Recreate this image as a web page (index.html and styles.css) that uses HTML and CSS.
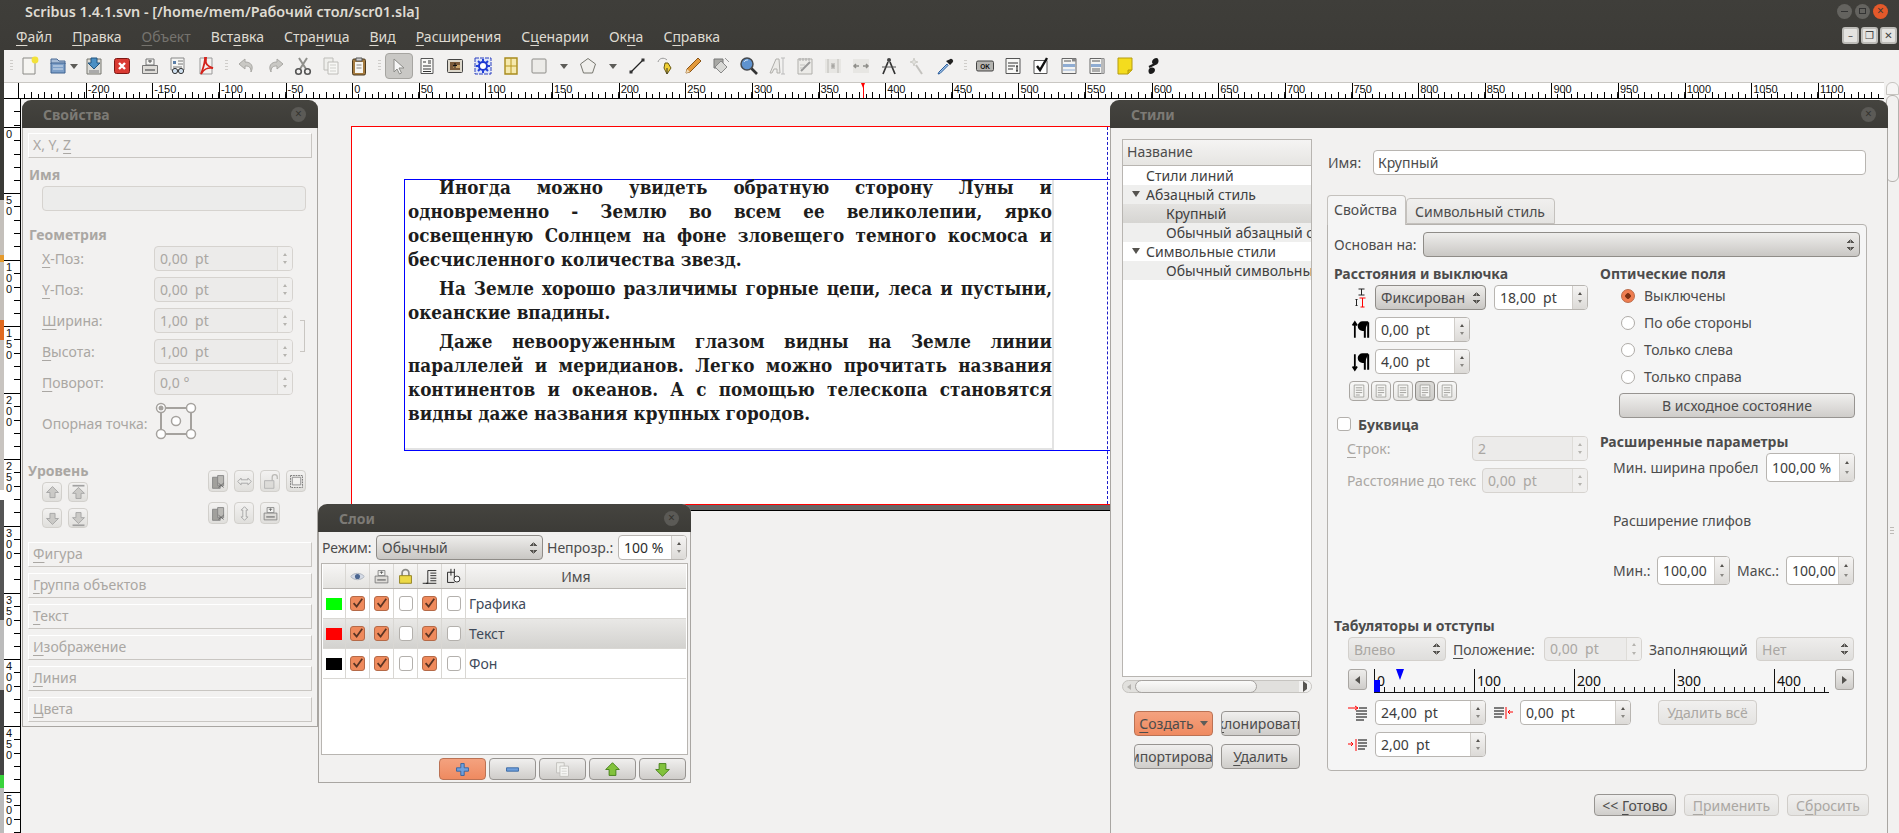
FILE: index.html
```html
<!DOCTYPE html>
<html lang="ru">
<head>
  <meta charset="UTF-8" />
  <title>Scribus 1.4.1.svn</title>
  <link rel="stylesheet" href="styles.css">
</head>
<body>

<svg class="sprite" xmlns="http://www.w3.org/2000/svg">
  <symbol id="i-new" viewBox="0 0 20 20"><path d="M3 2h12v16H3z" fill="#f6f5f2" stroke="#8a8a86"/><circle cx="15" cy="4" r="3.4" fill="#f3e23a"/></symbol>
  <symbol id="i-open" viewBox="0 0 20 20"><path d="M2 3h6l2 2h6v3H2z" fill="#a9bdd6" stroke="#4a6b96"/><path d="M2 7h14v10H2z" fill="#7d9fc8" stroke="#3f6390"/><path d="M4 10h10M4 13h10" stroke="#d6e1ee"/></symbol>
  <symbol id="i-save" viewBox="0 0 20 20"><path d="M3 3h14v15H3z" fill="#dcdcd8" stroke="#77776f"/><path d="M5 14h10v3H5z" fill="#aaa"/><path d="M7 2h6v5h3l-6 6-6-6h3z" fill="#4a8fc4" stroke="#23557f"/></symbol>
  <symbol id="i-close" viewBox="0 0 20 20"><rect x="2.5" y="2.5" width="15" height="15" rx="2" fill="#d93a32" stroke="#7d1612"/><path d="M7 7l6 6M13 7l-6 6" stroke="#fff" stroke-width="2.4"/></symbol>
  <symbol id="i-print" viewBox="0 0 20 20"><path d="M6 3h8v6H6z" fill="#f4f4f2" stroke="#777"/><path d="M2.500 9.500h15v8h-15z" fill="#dedcd8" stroke="#777"/><path d="M5 14h10" stroke="#888" stroke-width="2"/><path d="M8 5h4M10 4v3" stroke="#555"/></symbol>
  <symbol id="i-preflight" viewBox="0 0 20 20"><path d="M3 2h13v12H3z" fill="#f5f5f3" stroke="#888"/><path d="M5 5h3v3H5z" fill="#5a7ea8"/><path d="M10 5h5M10 8h5M5 11h9" stroke="#777"/><circle cx="7" cy="15" r="2.600" fill="#cfe0f0" stroke="#333"/><circle cx="13" cy="15" r="2.600" fill="#cfe0f0" stroke="#333"/></symbol>
  <symbol id="i-pdf" viewBox="0 0 20 20"><path d="M4 2h12v16H4z" fill="#f3f2f0" stroke="#999"/><path d="M10 2c-1 6 1 8 7 10-6-1-9 1-12 6 2-6 4-10 4-16z" fill="none" stroke="#d4231c" stroke-width="1.800"/></symbol>
  <symbol id="i-undo" viewBox="0 0 20 20"><path d="M8 3L2 8l6 5v-3c4 0 6 1 6 6 3-6 0-10-6-10z" fill="#c9c8c4" stroke="#a9a8a4"/></symbol>
  <symbol id="i-redo" viewBox="0 0 20 20"><path d="M12 3l6 5-6 5v-3c-4 0-6 1-6 6-3-6 0-10 6-10z" fill="#c9c8c4" stroke="#a9a8a4"/></symbol>
  <symbol id="i-cut" viewBox="0 0 20 20"><path d="M6 2l7 11M14 2L7 13" stroke="#8f8f8b" stroke-width="2"/><circle cx="5.500" cy="15.500" r="2.800" fill="none" stroke="#555" stroke-width="1.600"/><circle cx="14.500" cy="15.500" r="2.800" fill="none" stroke="#555" stroke-width="1.600"/></symbol>
  <symbol id="i-copy" viewBox="0 0 20 20"><path d="M3 2h9v12H3z" fill="#efefec" stroke="#bdbcb8"/><path d="M7 6h10v12H7z" fill="#f7f7f5" stroke="#bdbcb8"/><path d="M9 9h6M9 12h6M9 15h6" stroke="#cfcfcb"/></symbol>
  <symbol id="i-paste" viewBox="0 0 20 20"><rect x="3.500" y="3" width="13" height="16" rx="1.500" fill="#a57b3f" stroke="#4b3a20"/><path d="M6 6h8v11H6z" fill="#f7f6f2"/><path d="M7 2h6v3H7z" fill="#ccc" stroke="#555"/><path d="M7.500 9h5M7.500 12h5" stroke="#888"/></symbol>
  <symbol id="i-select" viewBox="0 0 20 20"><path d="M5 3l10 9h-5l2.500 5-2 1-2.500-5L5 16z" fill="#f6f6f6" stroke="#8c8c88"/></symbol>
  <symbol id="i-text" viewBox="0 0 20 20"><path d="M4 2.500h12v15H4z" fill="#f9f9f7" stroke="#555"/><path d="M6 6h3M11 5h3M11 7h3M6 10h8M6 13h8M6 15.500h8" stroke="#333"/></symbol>
  <symbol id="i-image" viewBox="0 0 20 20"><rect x="2.500" y="3.500" width="15" height="13" rx="1" fill="#ddd8cc" stroke="#444"/><path d="M5 6h10v8H5z" fill="#7a5a3a"/><path d="M8 12h7V9h-5z" fill="#c9a36a"/><path d="M10 7v5M8 9.500h4" stroke="#111"/></symbol>
  <symbol id="i-render" viewBox="0 0 20 20"><path d="M2 2h16v16H2z" fill="#dfe6f8" stroke="#2b3fbf" stroke-dasharray="4 1"/><circle cx="10" cy="10" r="4" fill="#fff" stroke="#1f38d0" stroke-width="2"/><path d="M10 3v3M10 14v3M3 10h3M14 10h3M5 5l2 2M15 5l-2 2M5 15l2-2M15 15l-2-2" stroke="#2340d8" stroke-width="2"/></symbol>
  <symbol id="i-table" viewBox="0 0 20 20"><path d="M4 2h12v16H4z" fill="#f5e9ae" stroke="#a88a1c" stroke-width="1.400"/><path d="M10 2v16M4 10h12" stroke="#b8981f"/></symbol>
  <symbol id="i-shape" viewBox="0 0 20 20"><rect x="3" y="3" width="14" height="14" rx="1" fill="#ecebe8" stroke="#8d8c88"/></symbol>
  <symbol id="i-poly" viewBox="0 0 20 20"><path d="M10 2.500l7.500 5.500-3 9h-9l-3-9z" fill="#f0efec" stroke="#77776f"/></symbol>
  <symbol id="i-line" viewBox="0 0 20 20"><path d="M4 16L16 4" stroke="#222" stroke-width="1.300"/><path d="M2.500 14.500h3v3h-3zM14.500 2.500h3v3h-3z" fill="#333"/></symbol>
  <symbol id="i-nib" viewBox="0 0 20 20"><path d="M3 6c1-4 6-5 9-2" fill="none" stroke="#999"/><path d="M10 7l3 0 3 5-4 6-3-6z" fill="#f0cf34" stroke="#6a5a10"/><path d="M12 12v6" stroke="#333"/></symbol>
  <symbol id="i-pencil" viewBox="0 0 20 20"><path d="M15 2l3 3L7 16l-4 1 1-4z" fill="#e39a3c" stroke="#8a5518"/><path d="M3 17l1-4 3 3z" fill="#f3dcb6"/></symbol>
  <symbol id="i-rotate" viewBox="0 0 20 20"><path d="M3 3h9v9H3z" fill="#a8a8a4" stroke="#777"/><path d="M10 5l6 6-6 6-6-6z" fill="#d9d9d6" stroke="#888"/><path d="M14 2l4 4" stroke="#999"/></symbol>
  <symbol id="i-zoom" viewBox="0 0 20 20"><circle cx="8" cy="8" r="6" fill="#5f93cf" stroke="#46494d" stroke-width="1.500"/><path d="M5 6c1-2 3-2 4-2" stroke="#cfe2f5" fill="none"/><path d="M12.500 12.500l5.500 5.500" stroke="#333" stroke-width="2.600"/></symbol>
  <symbol id="i-edit" viewBox="0 0 20 20"><path d="M3 17L9 3h3l1 14h-3l0-4H7l-2 4z" fill="#ecebe8" stroke="#b0afab"/><path d="M16 2v16M14 2h4M14 18h4" stroke="#bbb"/></symbol>
  <symbol id="i-story" viewBox="0 0 20 20"><path d="M3 3h14v15H3z" fill="#ecebe8" stroke="#b0afab"/><path d="M5 2v3M8 2v3M11 2v3M14 2v3" stroke="#aaa"/><path d="M6 15L15 6" stroke="#999" stroke-width="2"/><path d="M5 9h5M5 12h3" stroke="#c3c3c0"/></symbol>
  <symbol id="i-link" viewBox="0 0 20 20"><path d="M2 3h16v14H2z" fill="#e7e6e3"/><path d="M5 3v14M15 3v14" stroke="#d2d1cd" stroke-width="2"/><path d="M8 7h4v6H8z" fill="#c6c5c2"/><path d="M10 8v4M8.500 10h3" stroke="#9e9d99"/></symbol>
  <symbol id="i-unlink" viewBox="0 0 20 20"><path d="M2 3h16v14H2z" fill="#e7e6e3"/><path d="M4 10h4M5 8l-2 2 2 2M16 10h-4M15 8l2 2-2 2" fill="none" stroke="#8f8e8a" stroke-width="1.500"/></symbol>
  <symbol id="i-measure" viewBox="0 0 20 20"><circle cx="10" cy="4" r="2" fill="#444"/><path d="M9 6L4 18M11 6l5 12" stroke="#333" stroke-width="1.700"/><path d="M3 11h14" stroke="#555"/></symbol>
  <symbol id="i-wand" viewBox="0 0 20 20"><path d="M9 9l6 9" stroke="#c3c2be" stroke-width="2"/><path d="M7 2l1 3 3 1-3 1-1 3-1-3-3-1 3-1z" fill="#e2e1dd" stroke="#cfcec9"/></symbol>
  <symbol id="i-dropper" viewBox="0 0 20 20"><path d="M12 8L4 16l-1 2 2-.5 8-8z" fill="#9cc2e8" stroke="#2b5d9c"/><path d="M11 5l4 4 2.500-2.500a2 2 0 0 0-3-3z" fill="#222"/></symbol>
  <symbol id="i-ok" viewBox="0 0 20 20"><rect x="1.500" y="5" width="17" height="10" rx="1.500" fill="#b5b4b0" stroke="#444"/><text x="10" y="12.500" font-family="Liberation Sans" font-weight="700" font-size="6.500" text-anchor="middle" fill="#111">OK</text></symbol>
  <symbol id="i-ptext" viewBox="0 0 20 20"><path d="M3 2.500h14v15H3z" fill="#f8f8f6" stroke="#555"/><path d="M5 7h10M5 10h7M5 13h5" stroke="#333"/><path d="M14 10v5M13 10h2M13 15h2" stroke="#111"/></symbol>
  <symbol id="i-pcheck" viewBox="0 0 20 20"><path d="M3 4.500h13v13H3z" fill="#fff" stroke="#555"/><path d="M6 10l3 4 7-12" fill="none" stroke="#111" stroke-width="2.400"/></symbol>
  <symbol id="i-pcombo" viewBox="0 0 20 20"><path d="M3 2.500h14v15H3z" fill="#f3f3f1" stroke="#666"/><path d="M13 2.500h4v3h-4z" fill="#888"/><path d="M5 5h7" stroke="#555"/><path d="M4 8h12v3H4z" fill="#8facd2"/><path d="M4 13h12v2H4z" fill="#c3d1e4"/></symbol>
  <symbol id="i-plist" viewBox="0 0 20 20"><path d="M3 2.500h14v15H3z" fill="#f3f3f1" stroke="#666"/><path d="M14 2.500h3v15h-3z" fill="#bbb"/><path d="M5 5h8" stroke="#555"/><path d="M4 8h10v3H4z" fill="#8facd2"/><path d="M5 13h8M5 15h8" stroke="#666"/></symbol>
  <symbol id="i-note" viewBox="0 0 20 20"><path d="M3 2h14v12l-4 4H3z" fill="#f4dc1e" stroke="#b59c10"/><path d="M13 18v-4h4" fill="#d9c013" stroke="#b59c10"/></symbol>
  <symbol id="i-chain" viewBox="0 0 20 20"><path d="M14 2c-3 0-5 2-5 4s2 3 5 2c2-1 2-5 0-6zM7 18c3 0 5-2 5-4s-2-3-5-2c-2 1-2 5 0 6z" fill="#1b1b1b"/><path d="M6 11l8-4" stroke="#1b1b1b" stroke-width="2"/></symbol>
  <symbol id="i-tick" viewBox="0 0 15 15"><path d="M3 7l3.500 4L13 2" fill="none" stroke="#5a3424" stroke-width="2"/></symbol>
  <symbol id="i-eye" viewBox="0 0 20 20"><path d="M2 10c4-5 12-5 16 0-4 5-12 5-16 0z" fill="#d5dbe6" stroke="#a7adb8"/><circle cx="10" cy="10" r="3" fill="#4b6691"/></symbol>
  <symbol id="i-lock" viewBox="0 0 20 20"><path d="M6 9V6a4 4 0 0 1 8 0v3" fill="none" stroke="#8a8a86" stroke-width="2"/><path d="M3 9h14v9H3z" fill="#ecd946" stroke="#8a7a14"/></symbol>
  <symbol id="i-flow" viewBox="0 0 20 20"><path d="M8 3h10M11 6h7M11 9h7M11 12h7M11 15h7M6 18h12M8 3v15M2 18h6" stroke="#111" fill="none"/></symbol>
  <symbol id="i-hand" viewBox="0 0 20 20"><path d="M3 5h8M7 1v8M3 5v12h8M11 1v11" fill="none" stroke="#111"/><circle cx="14" cy="13" r="3.500" fill="#fff" stroke="#111"/></symbol>
  <symbol id="i-plus" viewBox="0 0 20 20"><path d="M8 3h4v5h5v4h-5v5H8v-5H3V8h5z" fill="#6f9fdc" stroke="#2d5f9e"/></symbol>
  <symbol id="i-minus" viewBox="0 0 20 20"><path d="M3 8h14v4H3z" fill="#6f9fdc" stroke="#2d5f9e"/></symbol>
  <symbol id="i-gup" viewBox="0 0 20 20"><path d="M10 2l8 8h-4v7H6v-7H2z" fill="#82c23c" stroke="#3d7a12"/></symbol>
  <symbol id="i-gdn" viewBox="0 0 20 20"><path d="M10 18l8-8h-4V3H6v7H2z" fill="#82c23c" stroke="#3d7a12"/></symbol>
  <symbol id="i-lvup" viewBox="0 0 20 20"><path d="M10 3l7 7h-4v6H7v-6H3z" fill="#c8c7c4" stroke="#999"/></symbol>
  <symbol id="i-lvtop" viewBox="0 0 20 20"><path d="M3 2h14" stroke="#999" stroke-width="2"/><path d="M10 4l7 7h-4v6H7v-6H3z" fill="#c8c7c4" stroke="#999"/></symbol>
  <symbol id="i-lvdn" viewBox="0 0 20 20"><path d="M10 17l7-7h-4V4H7v6H3z" fill="#c8c7c4" stroke="#999"/></symbol>
  <symbol id="i-lvbot" viewBox="0 0 20 20"><path d="M3 18h14" stroke="#999" stroke-width="2"/><path d="M10 16l7-7h-4V3H7v6H3z" fill="#c8c7c4" stroke="#999"/></symbol>
  <symbol id="i-lgroup" viewBox="0 0 20 20"><path d="M3 5h9v13H3z" fill="#9a9995" stroke="#777"/><path d="M9 3h7v12H9z" fill="#b5b4b0" stroke="#777"/><path d="M10 12l6 5M16 12l-6 5" stroke="#555"/></symbol>
  <symbol id="i-lunlock" viewBox="0 0 20 20"><path d="M12 9V5a3 3 0 0 1 6 0v2" fill="none" stroke="#b5b4b0" stroke-width="1.500"/><path d="M3 9h11v9H3z" fill="#dcdbd8" stroke="#aaa"/></symbol>
  <symbol id="i-lsize" viewBox="0 0 20 20"><path d="M3 3h14v14H3z" fill="#f3f2f0" stroke="#555" stroke-dasharray="2 1"/><path d="M5 5h10v9H5z" fill="none" stroke="#777"/></symbol>
  <symbol id="i-lhflip" viewBox="0 0 20 20"><path d="M2 10l4-4v2h8V6l4 4-4 4v-2H6v2z" fill="#ececea" stroke="#999"/></symbol>
  <symbol id="i-lvflip" viewBox="0 0 20 20"><path d="M10 2l4 4h-2v8h2l-4 4-4-4h2V6H6z" fill="#ececea" stroke="#999"/></symbol>
  <symbol id="i-align" viewBox="0 0 20 20"><path d="M4 2.500h12v15H4z" fill="#f6f6f4" stroke="#9b9a96"/><path d="M6 6h8M6 9h8M6 12h8M6 15h5" stroke="#8d8c88"/></symbol>
  <symbol id="i-lead" viewBox="0 0 14 20"><path d="M7 1v6M4 1h6M4 7h6" stroke="#222"/><path d="M8 10v9M5 10h6M6 19h4" stroke="#f00"/><path d="M2 11v7M1 12l1-1 1 1M1 17l1 1 1-1" stroke="#222" fill="none"/></symbol>
  <symbol id="i-pabove" viewBox="0 0 18 18"><path d="M3 2v14M1 5l2-3 2 3" stroke="#000" stroke-width="1.600" fill="none"/><path d="M12 2v14M15 2v14M15 2H10a3.500 3.500 0 0 0 0 7h2" stroke="#000" stroke-width="1.800" fill="#000"/></symbol>
  <symbol id="i-pbelow" viewBox="0 0 18 18"><path d="M3 2v14M1 13l2 3 2-3" stroke="#000" stroke-width="1.600" fill="none"/><path d="M12 2v14M15 2v14M15 2H10a3.500 3.500 0 0 0 0 7h2" stroke="#000" stroke-width="1.800" fill="#000"/></symbol>
  <symbol id="i-ifirst" viewBox="0 0 20 16"><path d="M0 3h10M7 1l3 2-3 2" stroke="#f00" fill="none"/><path d="M11 3h8M8 6h11M8 9h11M8 12h11M8 15h8" stroke="#000"/></symbol>
  <symbol id="i-ileft" viewBox="0 0 20 16"><path d="M0 7h5M3 5l2 2-2 2" stroke="#f00" fill="none"/><path d="M8 2v12" stroke="#f00"/><path d="M10 3h9M10 6h9M10 9h9M10 12h7" stroke="#000"/></symbol>
  <symbol id="i-iright" viewBox="0 0 20 16"><path d="M0 3h10M0 6h10M0 9h10M0 12h8" stroke="#000"/><path d="M12 2v12" stroke="#f00"/><path d="M19 7h-5M16 5l-2 2 2 2" stroke="#f00" fill="none"/></symbol>
</svg>

<header class="topbar">
  <div class="title-row">
    <span class="app-title">Scribus 1.4.1.svn - [/home/mem/Рабочий стол/scr01.sla]</span>
    <div class="wm-buttons"><i class="wm"><b class="wm-min"></b></i><i class="wm"><b class="wm-max"></b></i><i class="wm wm-close">×</i></div>
  </div>
  <div class="menu-row">
    <nav class="menu">
      <span><u>Ф</u>айл</span><span><u>П</u>равка</span><span class="off"><u>О</u>бъект</span><span>Вст<u>а</u>вка</span><span>Стра<u>н</u>ица</span><span><u>В</u>ид</span><span><u>Р</u>асширения</span><span>С<u>ц</u>енарии</span><span>Ок<u>н</u>а</span><span>С<u>п</u>равка</span>
    </nav>
    <div class="mdi-buttons"><i class="mdi">–</i><i class="mdi">❐</i><i class="mdi">✕</i></div>
  </div>
</header>

<div class="desk">
  <div class="strip"></div>
  <div class="desk-main">

    <div class="toolbar">
      <i class="grip g-a"></i>
      <span class="tool"><svg><use href="#i-new"/></svg></span>
      <span class="tool tool-open"><svg><use href="#i-open"/></svg><b class="drop"></b></span>
      <span class="tool"><svg><use href="#i-save"/></svg></span>
      <span class="tool"><svg><use href="#i-close"/></svg></span>
      <span class="tool"><svg><use href="#i-print"/></svg></span>
      <span class="tool"><svg><use href="#i-preflight"/></svg></span>
      <span class="tool"><svg><use href="#i-pdf"/></svg></span>
      <i class="grip g-b"></i>
      <span class="tool"><svg><use href="#i-undo"/></svg></span>
      <span class="tool"><svg><use href="#i-redo"/></svg></span>
      <span class="tool"><svg><use href="#i-cut"/></svg></span>
      <span class="tool"><svg><use href="#i-copy"/></svg></span>
      <span class="tool"><svg><use href="#i-paste"/></svg></span>
      <i class="grip g-c"></i>
      <span class="tool active"><svg><use href="#i-select"/></svg></span>
      <span class="tool"><svg><use href="#i-text"/></svg></span>
      <span class="tool"><svg><use href="#i-image"/></svg></span>
      <span class="tool"><svg><use href="#i-render"/></svg></span>
      <span class="tool"><svg><use href="#i-table"/></svg></span>
      <span class="tool"><svg><use href="#i-shape"/></svg></span>
      <span class="tool-arrow"><b class="drop"></b></span>
      <span class="tool"><svg><use href="#i-poly"/></svg></span>
      <span class="tool-arrow"><b class="drop"></b></span>
      <span class="tool"><svg><use href="#i-line"/></svg></span>
      <span class="tool"><svg><use href="#i-nib"/></svg></span>
      <span class="tool"><svg><use href="#i-pencil"/></svg></span>
      <span class="tool"><svg><use href="#i-rotate"/></svg></span>
      <span class="tool"><svg><use href="#i-zoom"/></svg></span>
      <span class="tool"><svg><use href="#i-edit"/></svg></span>
      <span class="tool"><svg><use href="#i-story"/></svg></span>
      <span class="tool"><svg><use href="#i-link"/></svg></span>
      <span class="tool"><svg><use href="#i-unlink"/></svg></span>
      <span class="tool"><svg><use href="#i-measure"/></svg></span>
      <span class="tool"><svg><use href="#i-wand"/></svg></span>
      <span class="tool"><svg><use href="#i-dropper"/></svg></span>
      <i class="grip g-c"></i>
      <span class="tool"><svg><use href="#i-ok"/></svg></span>
      <span class="tool"><svg><use href="#i-ptext"/></svg></span>
      <span class="tool"><svg><use href="#i-pcheck"/></svg></span>
      <span class="tool"><svg><use href="#i-pcombo"/></svg></span>
      <span class="tool"><svg><use href="#i-plist"/></svg></span>
      <span class="tool"><svg><use href="#i-note"/></svg></span>
      <span class="tool"><svg><use href="#i-chain"/></svg></span>
    </div>

    <div class="hruler">
      <div class="corner"></div>
      <div class="hcell blank"></div>
      <div class="hcell">-200</div><div class="hcell">-150</div><div class="hcell">-100</div><div class="hcell">-50</div>
      <div class="hcell">0</div><div class="hcell">50</div><div class="hcell">100</div><div class="hcell">150</div>
      <div class="hcell">200</div><div class="hcell">250</div><div class="hcell">300</div><div class="hcell">350</div>
      <div class="hcell">400</div><div class="hcell">450</div><div class="hcell">500</div><div class="hcell">550</div>
      <div class="hcell">600</div><div class="hcell">650</div><div class="hcell">700</div><div class="hcell">750</div>
      <div class="hcell">800</div><div class="hcell">850</div><div class="hcell">900</div><div class="hcell">950</div>
      <div class="hcell">1000</div><div class="hcell">1050</div><div class="hcell">1100</div>
      <i class="pos-mark"></i>
    </div>

    <div class="work">
      <div class="vruler">
        <div class="vcell first"></div>
        <div class="vcell"><b>0</b></div>
        <div class="vcell"><b>5</b><b>0</b></div>
        <div class="vcell"><b>1</b><b>0</b><b>0</b></div>
        <div class="vcell"><b>1</b><b>5</b><b>0</b></div>
        <div class="vcell"><b>2</b><b>0</b><b>0</b></div>
        <div class="vcell"><b>2</b><b>5</b><b>0</b></div>
        <div class="vcell"><b>3</b><b>0</b><b>0</b></div>
        <div class="vcell"><b>3</b><b>5</b><b>0</b></div>
        <div class="vcell"><b>4</b><b>0</b><b>0</b></div>
        <div class="vcell"><b>4</b><b>5</b><b>0</b></div>
        <div class="vcell"><b>5</b><b>0</b><b>0</b></div>
      </div>
      <div class="canvas">
        <div class="page">
          <i class="margin-guide"></i>
          <div class="frame">
            <div class="story">
              <p><span class="ln first">Иногда можно увидеть обратную сторону Луны и</span><span class="ln">одновременно - Землю во всем ее великолепии, ярко</span><span class="ln">освещенную Солнцем на фоне зловещего темного космоса и</span><span class="end">бесчисленного количества звезд.</span></p>
              <p><span class="ln first">На Земле хорошо различимы горные цепи, леса и пустыни,</span><span class="end">океанские впадины.</span></p>
              <p><span class="ln first">Даже невооруженным глазом видны на Земле линии</span><span class="ln">параллелей и меридианов. Легко можно прочитать названия</span><span class="ln">континентов и океанов. А с помощью телескопа становятся</span><span class="end">видны даже названия крупных городов.</span></p>
            </div>
          </div>
        </div>
      </div>
    </div>
  </div>
</div>

<div class="vscroll"><i class="vscroll-btn"></i><i class="vscroll-thumb"></i></div>
<i class="edge-grip"></i>

<!-- Свойства -->
<section class="win win-props">
  <div class="win-title"><span>Свойства</span><i class="win-close">×</i></div>
  <div class="section first-section">X, Y, <u>Z</u></div>
  <h3 class="head name-head">Имя</h3>
  <div class="name-field"></div>
  <h3 class="head geo-head">Геометрия</h3>
  <div class="geo-grid">
    <span class="lab"><u>X</u>-Поз:</span><div class="spin off"><span class="val">0,00&nbsp; pt</span><span class="btns"><i class="up"></i><i class="dn"></i></span></div>
    <span class="lab"><u>Y</u>-Поз:</span><div class="spin off"><span class="val">0,00&nbsp; pt</span><span class="btns"><i class="up"></i><i class="dn"></i></span></div>
    <span class="lab"><u>Ш</u>ирина:</span><div class="spin off"><span class="val">1,00&nbsp; pt</span><span class="btns"><i class="up"></i><i class="dn"></i></span></div>
    <span class="lab"><u>В</u>ысота:</span><div class="spin off"><span class="val">1,00&nbsp; pt</span><span class="btns"><i class="up"></i><i class="dn"></i></span></div>
    <span class="lab"><u>П</u>оворот:</span><div class="spin off"><span class="val">0,0 °</span><span class="btns"><i class="up"></i><i class="dn"></i></span></div>
    <i class="ratio-link"></i>
  </div>
  <div class="anchor-row">
    <span class="lab">Опорная точка:</span>
    <svg class="anchor" viewBox="0 0 42 38"><rect x="6" y="6" width="30" height="26" fill="none" stroke="#a5a29e" stroke-width="2"/><circle cx="6" cy="6" r="4.500" fill="#fff" stroke="#a5a29e" stroke-width="1.500"/><circle cx="6" cy="6" r="2.500" fill="#a5a29e"/><circle cx="36" cy="6" r="4.500" fill="#fff" stroke="#a5a29e" stroke-width="1.500"/><circle cx="6" cy="32" r="4.500" fill="#fff" stroke="#a5a29e" stroke-width="1.500"/><circle cx="36" cy="32" r="4.500" fill="#fff" stroke="#a5a29e" stroke-width="1.500"/><circle cx="21" cy="19" r="4.500" fill="#fff" stroke="#a5a29e" stroke-width="1.500"/></svg>
  </div>
  <div class="level-row">
    <div class="level-left">
      <h3 class="head">Уровень</h3>
      <div class="level-btns">
        <span class="ibtn"><svg><use href="#i-lvup"/></svg></span><span class="ibtn"><svg><use href="#i-lvtop"/></svg></span>
        <span class="ibtn"><svg><use href="#i-lvdn"/></svg></span><span class="ibtn"><svg><use href="#i-lvbot"/></svg></span>
      </div>
    </div>
    <div class="level-right">
      <span class="ibtn"><svg><use href="#i-lgroup"/></svg></span><span class="ibtn"><svg><use href="#i-lhflip"/></svg></span><span class="ibtn"><svg><use href="#i-lunlock"/></svg></span><span class="ibtn"><svg><use href="#i-lsize"/></svg></span>
      <span class="ibtn"><svg><use href="#i-lgroup"/></svg></span><span class="ibtn"><svg><use href="#i-lvflip"/></svg></span><span class="ibtn"><svg><use href="#i-print"/></svg></span>
    </div>
  </div>
  <div class="section-list">
    <div class="section"><u>Ф</u>игура</div>
    <div class="section"><u>Г</u>руппа объектов</div>
    <div class="section"><u>Т</u>екст</div>
    <div class="section"><u>И</u>зображение</div>
    <div class="section"><u>Л</u>иния</div>
    <div class="section"><u>Ц</u>вета</div>
  </div>
</section>

<!-- Слои -->
<section class="win win-layers">
  <div class="win-title"><span>Слои</span><i class="win-close">×</i></div>
  <div class="layer-top">
    <span class="mode-lab">Режим:</span>
    <div class="sel mode-sel"><span>Обычный</span><i class="updown"></i></div>
    <span class="op-lab">Непрозр.:</span>
    <div class="spin op-spin"><span class="val">100 %</span><span class="btns"><i class="up"></i><i class="dn"></i></span></div>
  </div>
  <div class="layer-table">
    <div class="lrow lhead">
      <span></span>
      <span><svg><use href="#i-eye"/></svg></span><span><svg><use href="#i-print"/></svg></span><span><svg><use href="#i-lock"/></svg></span><span><svg><use href="#i-flow"/></svg></span><span><svg><use href="#i-hand"/></svg></span>
      <span class="lname-head">Имя</span>
    </div>
    <div class="lrow">
      <span><i class="swatch green"></i></span>
      <span><i class="chk on"><svg><use href="#i-tick"/></svg></i></span><span><i class="chk on"><svg><use href="#i-tick"/></svg></i></span><span><i class="chk"></i></span><span><i class="chk on"><svg><use href="#i-tick"/></svg></i></span><span><i class="chk"></i></span>
      <span class="lname">Графика</span>
    </div>
    <div class="lrow current">
      <span><i class="swatch red"></i></span>
      <span><i class="chk on"><svg><use href="#i-tick"/></svg></i></span><span><i class="chk on"><svg><use href="#i-tick"/></svg></i></span><span><i class="chk"></i></span><span><i class="chk on"><svg><use href="#i-tick"/></svg></i></span><span><i class="chk"></i></span>
      <span class="lname">Текст</span>
    </div>
    <div class="lrow">
      <span><i class="swatch black"></i></span>
      <span><i class="chk on"><svg><use href="#i-tick"/></svg></i></span><span><i class="chk on"><svg><use href="#i-tick"/></svg></i></span><span><i class="chk"></i></span><span><i class="chk on"><svg><use href="#i-tick"/></svg></i></span><span><i class="chk"></i></span>
      <span class="lname">Фон</span>
    </div>
  </div>
  <div class="layer-btns">
    <span class="btn hot"><svg><use href="#i-plus"/></svg></span>
    <span class="btn"><svg><use href="#i-minus"/></svg></span>
    <span class="btn"><svg><use href="#i-copy"/></svg></span>
    <span class="btn"><svg><use href="#i-gup"/></svg></span>
    <span class="btn"><svg><use href="#i-gdn"/></svg></span>
  </div>
</section>

<!-- Стили -->
<section class="win win-styles">
  <div class="win-title"><span>Стили</span><i class="win-close">×</i></div>
  <div class="styles-body">

    <div class="styles-left">
      <div class="tree">
        <div class="tree-head">Название</div>
        <div class="tree-row lv1">Стили линий</div>
        <div class="tree-row lv1 alt open">Абзацный стиль</div>
        <div class="tree-row lv2 selected">Крупный</div>
        <div class="tree-row lv2 alt">Обычный абзацный стиль</div>
        <div class="tree-row lv1 open">Символьные стили</div>
        <div class="tree-row lv2 alt">Обычный символьный стиль</div>
      </div>
      <div class="hscroll"><i class="hs-l"></i><i class="hs-thumb"></i><i class="hs-r"></i></div>
      <div class="style-btns">
        <span class="btn hot"><span><u>С</u>оздать</span><b class="drop"></b></span>
        <span class="btn clip"><span><u>к</u>лонировать</span></span>
        <span class="btn clip"><span><u>и</u>мпортировать</span></span>
        <span class="btn"><span><u>У</u>далить</span></span>
      </div>
    </div>

    <div class="styles-right">
      <div class="name-row"><span class="name-lab">Имя:</span><div class="edit"><span>Крупный</span></div></div>
      <div class="tabs"><span class="tab current">Свойства</span><span class="tab">Символьный стиль</span></div>
      <div class="pane">
        <div class="based-row"><span class="based-lab">Основан на:</span><div class="sel based-sel"><span></span><i class="updown"></i></div></div>
        <div class="pane-cols">
          <div class="col-left">
            <h3 class="head dark">Расстояния и выключка</h3>
            <div class="para-row first-para">
              <svg class="lead-ico"><use href="#i-lead"/></svg>
              <div class="sel line-sel"><span>Фиксирован</span><i class="updown"></i></div>
              <div class="spin line-spin"><span class="val">18,00&nbsp; pt</span><span class="btns"><i class="up"></i><i class="dn"></i></span></div>
            </div>
            <div class="para-row">
              <svg class="lead-ico"><use href="#i-pabove"/></svg>
              <div class="spin para-spin"><span class="val">0,00&nbsp; pt</span><span class="btns"><i class="up"></i><i class="dn"></i></span></div>
            </div>
            <div class="para-row">
              <svg class="lead-ico"><use href="#i-pbelow"/></svg>
              <div class="spin para-spin"><span class="val">4,00&nbsp; pt</span><span class="btns"><i class="up"></i><i class="dn"></i></span></div>
            </div>
            <div class="align-row">
              <span class="abtn"><svg><use href="#i-align"/></svg></span><span class="abtn"><svg><use href="#i-align"/></svg></span><span class="abtn"><svg><use href="#i-align"/></svg></span><span class="abtn down"><svg><use href="#i-align"/></svg></span><span class="abtn"><svg><use href="#i-align"/></svg></span>
            </div>
            <div class="drop-row"><i class="chk"></i><h3 class="head dark">Буквица</h3></div>
            <div class="drop-field lines"><span class="lab-off"><u>С</u>трок:</span><div class="spin off"><span class="val">2</span><span class="btns"><i class="up"></i><i class="dn"></i></span></div></div>
            <div class="drop-field dist"><span class="lab-off clip-lab">Расстояние до текста:</span><div class="spin off"><span class="val">0,00&nbsp; pt</span><span class="btns"><i class="up"></i><i class="dn"></i></span></div></div>
          </div>
          <div class="col-right">
            <h3 class="head dark">Оптические поля</h3>
            <div class="radios">
              <div class="radio-row"><i class="radio on"></i>Выключены</div>
              <div class="radio-row"><i class="radio"></i>По обе стороны</div>
              <div class="radio-row"><i class="radio"></i>Только слева</div>
              <div class="radio-row"><i class="radio"></i>Только справа</div>
            </div>
            <span class="btn reset-btn"><span>В исходное состояние</span></span>
            <h3 class="head dark ext-head">Расширенные параметры</h3>
            <div class="space-row"><span class="space-lab">Мин. ширина пробел</span><div class="spin tall space-spin"><span class="val">100,00 %</span><span class="btns"><i class="up"></i><i class="dn"></i></span></div></div>
            <div class="glyph-lab">Расширение глифов</div>
            <div class="glyph-row">
              <span class="min-lab">Мин.:</span>
              <div class="spin tall min-spin"><span class="val">100,00</span><span class="btns"><i class="up"></i><i class="dn"></i></span></div>
              <span class="max-lab">Макс.:</span>
              <div class="spin tall max-spin"><span class="val">100,00</span><span class="btns"><i class="up"></i><i class="dn"></i></span></div>
            </div>
          </div>
        </div>
        <h3 class="head dark tabs-head">Табуляторы и отступы</h3>
        <div class="tab-row">
          <div class="sel off tab-sel"><span>Влево</span><i class="updown"></i></div>
          <span class="pos-lab"><u>П</u>оложение:</span>
          <div class="spin off pos-spin"><span class="val">0,00&nbsp; pt</span><span class="btns"><i class="up"></i><i class="dn"></i></span></div>
          <span class="fill-lab">Заполняющий</span>
          <div class="sel off tab-sel"><span>Нет</span><i class="updown"></i></div>
        </div>
        <div class="tab-ruler-row">
          <span class="arrow-btn"><i class="tri-l"></i></span>
          <div class="tab-ruler">
            <span class="tcell">0</span><span class="tcell">100</span><span class="tcell">200</span><span class="tcell">300</span><span class="tcell">400</span>
            <i class="mark-first"></i><i class="mark-left"></i>
          </div>
          <span class="arrow-btn"><i class="tri-r"></i></span>
        </div>
        <div class="indent-row">
          <svg class="ind-ico"><use href="#i-ifirst"/></svg>
          <div class="spin ind-spin"><span class="val">24,00&nbsp; pt</span><span class="btns"><i class="up"></i><i class="dn"></i></span></div>
          <svg class="ind-ico second"><use href="#i-iright"/></svg>
          <div class="spin ind-spin"><span class="val">0,00&nbsp; pt</span><span class="btns"><i class="up"></i><i class="dn"></i></span></div>
          <span class="btn disabled clear-btn"><span>Удалить всё</span></span>
        </div>
        <div class="indent-row">
          <svg class="ind-ico"><use href="#i-ileft"/></svg>
          <div class="spin ind-spin"><span class="val">2,00&nbsp; pt</span><span class="btns"><i class="up"></i><i class="dn"></i></span></div>
        </div>
      </div>
      <div class="dialog-btns">
        <span class="btn done"><span>&lt;&lt; <u>Г</u>отово</span></span>
        <span class="btn disabled apply"><span><u>П</u>рименить</span></span>
        <span class="btn disabled done"><span>С<u>б</u>росить</span></span>
      </div>
    </div>
  </div>
</section>

</body>
</html>
```

FILE: styles.css
```css
* {
  box-sizing: border-box;
}

body {
  margin: 0;
  width: 1899px;
  height: 833px;
  overflow: hidden;
  position: relative;
  background-color: #f2f1f0;
  font-family: "Noto Sans", sans-serif;
  font-size: 14px;
  color: #4c4c4c;
}

i, b {
  font-style: normal;
}

u {
  text-underline-offset: 3px;
}

svg {
  display: block;
}

.sprite {
  display: none;
}

/* top bar */
.topbar {
  height: 50px;
  background: linear-gradient(#3f3e3a, #3c3b37);
  color: #dfdbd2;
}

.title-row {
  height: 25px;
  display: flex;
  justify-content: space-between;
  align-items: center;
  padding: 0 11px 3px 25px;
}

.app-title {
  font-size: 14.4px;
  font-weight: 600;
}

.wm-buttons {
  display: flex;
  gap: 3px;
}

.wm {
  width: 15px;
  height: 15px;
  border-radius: 50%;
  background: #64635f;
  display: flex;
  align-items: center;
  justify-content: center;
  color: #3c3b37;
  font-size: 12px;
  line-height: 1;
}

.wm-min {
  width: 7px;
  height: 1px;
  background: #333;
}

.wm-max {
  width: 7px;
  height: 6px;
  border: 1px solid #333;
}

.wm-close {
  background: #e4592a;
}

.menu-row {
  height: 25px;
  display: flex;
  justify-content: space-between;
  align-items: flex-start;
  padding: 2px 2px 0 16px;
}

.menu {
  display: flex;
  gap: 20px;
  font-size: 14px;
  line-height: 20px;
}

.menu .off {
  color: #75736e;
}

.mdi-buttons {
  display: flex;
  gap: 2px;
}

.mdi {
  width: 17px;
  height: 17px;
  background: #e4e3e0;
  border: 2px solid #bdbcb8;
  border-radius: 3px;
  color: #444;
  font-size: 10px;
  line-height: 13px;
  text-align: center;
  font-family: "DejaVu Sans", sans-serif;
}

/* desk */
.desk {
  display: flex;
  height: 783px;
}

.strip {
  flex: 0 0 4px;
  background: linear-gradient(#3a3a36 0 150px, #c4c0bb 150px 205px, #e59a2d 205px 212px, #c4c0bb 212px 270px, #e06a20 270px 290px, #c8c4c0 290px 440px, #fff 440px 450px, #555 450px 570px, #bbb 570px 640px, #444 640px 725px, #39d33c 725px 738px, #bbb 738px);
}

.desk-main {
  flex: 1;
  min-width: 0;
}

.toolbar {
  height: 32px;
  display: flex;
  align-items: center;
  padding-left: 3px;
  background-color: #f2f1f0;
}

.grip {
  display: block;
  height: 12px;
  background: repeating-linear-gradient(#cfcdca 0 1px, transparent 1px 3px) center / 3px 100% no-repeat;
}

.g-a {
  flex: 0 0 9px;
}

.g-b {
  flex: 0 0 13px;
}

.g-c {
  flex: 0 0 12px;
}

.tool {
  flex: 0 0 28px;
  height: 26px;
  display: flex;
  align-items: center;
  justify-content: center;
}

.tool svg {
  width: 20px;
  height: 20px;
}

.tool-open {
  flex-basis: 36px;
  justify-content: flex-start;
  padding-left: 5px;
  gap: 1px;
}

.tool-arrow {
  flex: 0 0 21px;
  display: flex;
  justify-content: center;
}

.tool.active {
  background: #c9c8c5;
  border: 1px solid #a6a5a1;
  border-radius: 4px;
}

.drop {
  display: inline-block;
  width: 0;
  height: 0;
  border: 4px solid transparent;
  border-top: 5px solid #5d5c58;
  border-bottom: 0;
}

/* rulers */
.hruler {
  height: 17px;
  display: flex;
  position: relative;
  width: 1880px;
  overflow: hidden;
  background: #fff;
  border-top: 1px solid #c9c7c3;
  border-bottom: 1px solid #000;
  margin-right: 12px;
}

.corner {
  flex: 0 0 15px;
  background: #fff;
  border-right: 1px solid #000;
}

.hcell {
  flex: 0 0 66.63px;
  padding-left: 1px;
  border-left: 1px solid #000;
  font-family: "Liberation Sans", sans-serif;
  font-size: 11px;
  line-height: 12px;
  color: #111;
  background:
    repeating-linear-gradient(90deg, transparent 0 12.32px, #000 12.32px 13.32px) bottom / 100% 6px no-repeat,
    repeating-linear-gradient(90deg, transparent 0 5.66px, #000 5.66px 6.66px) bottom / 100% 4px no-repeat;
}

.hcell.blank {
  border-left: 0;
}

.pos-mark {
  position: absolute;
  left: 859px;
  top: 0;
  width: 1px;
  height: 16px;
  background: #f00;
}

.pos-mark::before {
  content: "";
  position: absolute;
  left: -2px;
  top: 0;
  border: 2.5px solid transparent;
  border-top: 5px solid #f00;
  border-bottom: 0;
}

.work {
  display: flex;
  height: 734px;
}

.vruler {
  flex: 0 0 17px;
  background: #fff;
  border-right: 1px solid #000;
  overflow: hidden;
}

.vcell {
  height: 66.6px;
  padding-top: 1px;
  border-top: 1px solid #000;
  font-family: "Liberation Sans", sans-serif;
  font-size: 11px;
  line-height: 11px;
  color: #111;
  background:
    repeating-linear-gradient(transparent 0 12.32px, #000 12.32px 13.32px) right top / 6px 100% no-repeat;
}

.vcell.first {
  height: 27.5px;
  border-top: 0;
  padding: 0;
}

.vcell b {
  display: block;
  font-weight: 400;
  padding-left: 2px;
}

.canvas {
  flex: 1;
  min-width: 0;
  padding: 27px 0 0 330px;
  overflow: hidden;
}

.page {
  width: 1000px;
  height: 379px;
  padding: 52px 0 0 52px;
  position: relative;
  background: #fff;
  border: 1px solid #f00;
  box-shadow: 0 5px 0 #666, 0 6px 0 #000;
}

.margin-guide {
  position: absolute;
  left: 755px;
  top: 0;
  bottom: 0;
  border-left: 1px dashed #1c1cc8;
}

.frame {
  width: 900px;
  height: 272px;
  border: 1px solid #00f;
}

.story {
  display: flow-root;
  width: 649px;
  height: 270px;
  padding: 0 0 0 3px;
  border-right: 2px solid #e3e3e3;
  border-bottom: 2px solid #e3e3e3;
  font-family: "DejaVu Serif Condensed", "DejaVu Serif", serif;
  font-weight: 700;
  font-size: 18.7px;
  line-height: 24px;
  color: #1d1d1d;
}

.story p {
  margin: 0 0 5px;
}

.story p:first-child {
  margin-top: -5px;
}

.ln {
  display: block;
  text-align: justify;
  text-align-last: justify;
  white-space: nowrap;
}

.ln.first {
  padding-left: 31px;
}

.end {
  display: block;
}

.vscroll {
  position: absolute;
  left: 1886px;
  top: 82px;
  width: 13px;
  height: 100px;
}

.vscroll-btn {
  display: block;
  height: 13px;
  background: #f6f5f4;
  border: 1px solid #c6c4c0;
  border-radius: 6px 6px 0 0;
}

.vscroll-thumb {
  display: block;
  height: 87px;
  background: #f2f1f0;
  border: 1px solid #b5b2ae;
  border-radius: 6px;
}

.edge-grip {
  position: absolute;
  left: 1890px;
  top: 527px;
  width: 4px;
  height: 7px;
  background: repeating-linear-gradient(#bdbbb7 0 1px, transparent 1px 3px);
}

/* floating windows */
.win {
  position: absolute;
  background-color: #f2f1f0;
  border: 1px solid #a9a6a2;
  border-top: 0;
  border-radius: 9px 9px 0 0;
}

.win-title {
  height: 28px;
  margin: 0 -1px;
  display: flex;
  align-items: center;
  justify-content: space-between;
  padding: 0 12px 0 21px;
  background: linear-gradient(#45443f, #3c3b37);
  border-radius: 9px 9px 0 0;
  color: #7c7a75;
  font-size: 14px;
  font-weight: 700;
}

.win-close {
  width: 15px;
  height: 15px;
  border-radius: 50%;
  background: #5b5a56;
  color: #34332f;
  font-size: 12px;
  font-weight: 400;
  line-height: 14px;
  text-align: center;
}

.win-props {
  left: 22px;
  top: 100px;
  width: 296px;
  height: 627px;
  color: #aaa7a3;
}

.win-layers {
  left: 318px;
  top: 504px;
  width: 373px;
  height: 279px;
  z-index: 2;
}

.win-styles {
  left: 1110px;
  top: 100px;
  width: 778px;
  height: 733px;
  z-index: 3;
  border-bottom: 0;
}

.head {
  margin: 0;
  font-size: 14px;
  font-weight: 700;
  line-height: 17px;
  color: #aaa7a3;
  white-space: nowrap;
}

.head.dark {
  color: #4c4c4c;
}

/* Свойства */
.section {
  height: 25px;
  margin: 0 5px;
  padding-left: 4px;
  border: 1px solid;
  border-color: #fff #c9c6c2 #c9c6c2 #fff;
  line-height: 22px;
}

.first-section {
  margin-top: 5px;
}

.name-head {
  margin: 8px 0 0 6px;
}

.name-field {
  width: 264px;
  height: 25px;
  margin: 3px 0 0 19px;
  background: #ececeb;
  border: 1px solid #d6d3cf;
  border-radius: 4px;
}

.geo-head {
  margin: 15px 0 0 6px;
}

.geo-grid {
  display: grid;
  grid-template-columns: 112px 139px 14px;
  gap: 6px 0;
  margin: 3px 0 0 19px;
}

.lab {
  grid-column: 1;
  line-height: 25px;
}

.geo-grid .spin {
  grid-column: 2;
}

.ratio-link {
  grid-column: 3;
  grid-row: 3 / span 2;
  align-self: center;
  height: 32px;
  margin-left: 7px;
  width: 5px;
  border: 1px solid #c9c6c2;
  border-left: 0;
}

.anchor-row {
  display: flex;
  align-items: center;
  margin: 7px 0 0 19px;
}

.anchor-row .lab {
  flex: 0 0 113px;
  margin-top: 4px;
}

.anchor {
  width: 42px;
  height: 38px;
}

.level-row {
  display: flex;
  margin: 22px 0 0 5px;
}

.level-left {
  flex: 0 0 180px;
}

.level-btns {
  display: grid;
  grid-template-columns: 20px 20px;
  grid-auto-rows: 20px;
  gap: 6px;
  margin: 3px 0 0 14px;
}

.level-right {
  display: grid;
  grid-template-columns: repeat(4, 20px);
  grid-auto-rows: 22px;
  gap: 10px 6px;
  margin-top: 8px;
}

.ibtn {
  display: flex;
  align-items: center;
  justify-content: center;
  background: linear-gradient(#f3f2f1, #e0dfdc);
  border: 1px solid #d2d0cc;
  border-radius: 4px;
}

.ibtn svg {
  width: 17px;
  height: 17px;
  opacity: .9;
}

.section-list {
  display: flex;
  flex-direction: column;
  gap: 6px;
  margin-top: 14px;
}

/* common widgets */
.spin {
  display: flex;
  height: 25px;
  background: #fff;
  border: 1px solid #b8b5b1;
  border-radius: 4px;
  color: #3c3c3c;
}

.spin.tall {
  height: 29px;
}

.spin .val {
  flex: 1;
  min-width: 0;
  padding-left: 5px;
  line-height: 23px;
  white-space: nowrap;
  overflow: hidden;
}

.spin.tall .val {
  line-height: 28px;
}

.btns {
  flex: 0 0 15px;
  display: flex;
  flex-direction: column;
  align-items: center;
  justify-content: space-evenly;
  border-left: 1px solid #d0cdc9;
  border-radius: 0 3px 3px 0;
  background: linear-gradient(#f5f4f3, #dcdad7);
}

.up, .dn {
  width: 0;
  height: 0;
  border: 2.5px solid transparent;
}

.up {
  border-top: 0;
  border-bottom: 3px solid #55534f;
}

.dn {
  border-bottom: 0;
  border-top: 3px solid #8a8884;
}

.spin.off {
  background: #ecebea;
  border-color: #d6d3cf;
  color: #aaa7a3;
}

.spin.off .btns {
  background: #f0efee;
  border-left-color: #dedcd8;
}

.spin.off .up, .spin.off .dn {
  border-top-color: #b5b3af;
  border-bottom-color: #b5b3af;
}

.sel {
  display: flex;
  align-items: center;
  justify-content: space-between;
  height: 25px;
  padding: 0 5px;
  background: linear-gradient(#eeedeb, #c9c7c4);
  border: 1px solid #8f8c88;
  border-radius: 4px;
  color: #4c4c4c;
  white-space: nowrap;
}

.sel.off {
  background: linear-gradient(#eeedec, #dfdedc);
  border-color: #d3d0cc;
  color: #aaa7a3;
}

.updown {
  display: block;
  flex: 0 0 7px;
  height: 12px;
  background:
    linear-gradient(to bottom right, transparent 50%, #55534f 50%) left top / 3.5px 4px no-repeat,
    linear-gradient(to bottom left, transparent 50%, #55534f 50%) right top / 3.5px 4px no-repeat,
    linear-gradient(to top right, transparent 50%, #55534f 50%) left bottom / 3.5px 4px no-repeat,
    linear-gradient(to top left, transparent 50%, #55534f 50%) right bottom / 3.5px 4px no-repeat;
}

.btn {
  display: flex;
  align-items: center;
  justify-content: center;
  gap: 6px;
  height: 25px;
  white-space: nowrap;
  overflow: hidden;
  background: linear-gradient(#f0efee, #cfcdca);
  border: 1px solid #979491;
  border-radius: 4px;
  color: #4c4c4c;
}

.btn svg {
  width: 17px;
  height: 17px;
}

.btn.hot {
  background: linear-gradient(#f4a27f, #ef8a60);
  border-color: #bb7254;
}

.btn.disabled {
  background: linear-gradient(#f1f0ef, #e4e3e1);
  border-color: #d0cdc9;
  color: #aaa7a3;
}

.chk {
  display: block;
  flex: 0 0 14px;
  width: 14px;
  height: 14px;
  background: #fff;
  border: 1px solid #b3b0ac;
  border-radius: 3px;
}

.lrow .chk {
  width: 15px;
  height: 15px;
}

.chk.on {
  background: #ef8a5c;
  border-color: #b56a48;
}

.chk svg {
  width: 13px;
  height: 13px;
}

/* Слои */
.layer-top {
  display: flex;
  align-items: center;
  height: 25px;
  margin: 3px 0 0 3px;
}

.mode-lab {
  flex: 0 0 54px;
}

.mode-sel {
  flex: 0 0 167px;
}

.op-lab {
  flex: 0 0 75px;
  padding-left: 4px;
  white-space: nowrap;
}

.op-spin {
  flex: 0 0 69px;
}

.op-spin .val {
  color: #2c2c2c;
}

.layer-table {
  width: 367px;
  height: 192px;
  margin: 3px 0 0 2px;
  background: #fff;
  border: 1px solid #b8b5b1;
}

.lrow {
  display: grid;
  grid-template-columns: 23px repeat(5, 24px) 1fr;
  height: 30px;
  border-bottom: 1px solid #d9d7d3;
  margin: 0 1px;
}

.lrow > span {
  display: flex;
  align-items: center;
  justify-content: center;
  border-right: 1px solid #d9d7d3;
}

.lrow > span:last-child {
  border-right: 0;
}

.lhead {
  height: 25px;
  background: linear-gradient(#f7f6f5, #e4e3e0);
  border-bottom: 1px solid #b8b5b1;
}

.lhead svg {
  width: 17px;
  height: 17px;
}

.lrow > .lname {
  justify-content: flex-start;
  padding-left: 3px;
  color: #3f4a5a;
}

.current {
  background: linear-gradient(#e9e8e6, #d3d2cf);
}

.swatch {
  display: block;
  width: 16px;
  height: 12px;
}

.green {
  background: #0f0;
}

.red {
  background: #f00;
}

.black {
  background: #000;
}

.layer-btns {
  display: flex;
  justify-content: flex-end;
  gap: 3px;
  margin: 3px 4px 0 0;
}

.layer-btns .btn {
  flex: 0 0 47px;
  height: 22px;
}

/* Стили */
.styles-body {
  display: flex;
  padding: 11px 0 0 11px;
}

.styles-left {
  flex: 0 0 190px;
  min-width: 0;
}

.tree {
  height: 538px;
  background: #fff;
  border: 1px solid #b8b5b1;
  overflow: hidden;
  white-space: nowrap;
}

.tree-head {
  height: 26px;
  padding-left: 4px;
  line-height: 24px;
  background: linear-gradient(#f5f4f3, #e6e5e2);
  border-bottom: 1px solid #b8b5b1;
}

.tree-row {
  height: 19px;
  line-height: 19px;
  color: #3f3f3f;
  position: relative;
}

.lv1 {
  padding-left: 23px;
}

.lv2 {
  padding-left: 43px;
}

.alt {
  background: #efefee;
}

.selected {
  background: linear-gradient(#e4e3e1, #d6d5d2);
}

.open::before {
  content: "";
  position: absolute;
  left: 9px;
  top: 6px;
  border: 4px solid transparent;
  border-top: 6px solid #55534f;
  border-bottom: 0;
}

.hscroll {
  display: flex;
  align-items: center;
  height: 13px;
  margin-top: 3px;
  background: #e1e0dd;
  border: 1px solid #c6c4c0;
  border-radius: 7px;
}

.hs-l, .hs-r {
  flex: 0 0 12px;
  display: flex;
  justify-content: center;
}

.hs-l::before {
  content: "";
  border: 3px solid transparent;
  border-right: 4px solid #b5b3af;
  border-left: 0;
}

.hs-r::before {
  content: "";
  border: 3px solid transparent;
  border-left: 4px solid #55534f;
  border-right: 0;
}

.hs-thumb {
  flex: 0 0 122px;
  height: 13px;
  background: linear-gradient(#fafaf9, #e8e7e5);
  border: 1px solid #a6a3a0;
  border-radius: 7px;
}

.hs-r {
  margin-left: auto;
  background: #f2f1f0;
  height: 11px;
  border-radius: 0 6px 6px 0;
}

.style-btns {
  display: grid;
  grid-template-columns: 79px 79px;
  grid-auto-rows: 25px;
  gap: 8px;
  margin: 18px 0 0 12px;
}

.styles-right {
  flex: 0 0 542px;
  margin-left: 15px;
}

.name-row {
  display: flex;
  align-items: center;
  width: 539px;
  margin-top: 11px;
  padding-left: 1px;
}

.name-lab {
  flex: 0 0 45px;
}

.edit {
  flex: 1;
  height: 25px;
  padding-left: 4px;
  line-height: 23px;
  background: #fff;
  border: 1px solid #b8b5b1;
  border-radius: 4px;
}

.tabs {
  display: flex;
  align-items: flex-end;
  height: 29px;
  margin-top: 20px;
  position: relative;
  z-index: 1;
}

.tab {
  flex: 0 0 149px;
  height: 26px;
  padding-left: 8px;
  line-height: 25px;
  background: linear-gradient(#f0efee, #e4e3e1);
  border: 1px solid #c4c1bd;
  border-radius: 4px 4px 0 0;
  white-space: nowrap;
}

.tab.current {
  flex: 0 0 79px;
  height: 30px;
  margin-bottom: -1px;
  padding-left: 6px;
  background: #f5f5f5;
  border-bottom: 0;
  line-height: 27px;
}

.pane {
  width: 540px;
  height: 547px;
  padding: 7px 6px 0;
  background: #f5f5f5;
  border: 1px solid #b5b2ae;
  border-radius: 0 4px 4px 4px;
}

.based-row {
  display: flex;
  align-items: center;
}

.based-lab {
  flex: 0 0 89px;
  white-space: nowrap;
}

.based-sel {
  flex: 0 0 437px;
}

.pane-cols {
  display: flex;
  margin-top: 8px;
}

.col-left {
  flex: 0 0 266px;
}

.para-row {
  display: flex;
  align-items: center;
  margin-top: 7px;
}

.first-para {
  margin-top: 3px;
}

.lead-ico {
  flex: 0 0 41px;
  height: 20px;
  padding-left: 14px;
}

.line-sel {
  flex: 0 0 111px;
}

.line-spin {
  flex: 0 0 94px;
  margin-left: 8px;
}

.para-spin {
  flex: 0 0 95px;
}

.align-row {
  display: flex;
  gap: 2px;
  margin: 7px 0 0 15px;
}

.abtn {
  flex: 0 0 20px;
  height: 20px;
  padding: 1px;
  background: linear-gradient(#f8f8f7, #e8e7e5);
  border: 1px solid #a9a6a2;
  border-radius: 4px;
}

.abtn svg {
  width: 16px;
  height: 16px;
}

.abtn.down {
  background: linear-gradient(#dcdbd8, #cfcecb);
  border-color: #8f8c88;
}

.drop-row {
  display: flex;
  align-items: center;
  gap: 7px;
  height: 14px;
  margin: 16px 0 0 3px;
}

.drop-field {
  display: flex;
  align-items: center;
  padding-left: 13px;
  height: 25px;
}

.lab-off {
  color: #aaa7a3;
  white-space: nowrap;
}

.lines {
  margin-top: 5px;
}

.lines .lab-off {
  flex: 0 0 125px;
}

.lines .spin {
  flex: 0 0 116px;
}

.dist {
  margin-top: 7px;
}

.clip-lab {
  flex: 0 0 129px;
  overflow: hidden;
  margin-right: 6px;
}

.dist .spin {
  flex: 0 0 106px;
}

.col-right {
  flex: 0 0 256px;
}

.radio-row {
  display: flex;
  align-items: center;
  gap: 9px;
  height: 27px;
  padding-left: 21px;
}

.radio {
  display: block;
  width: 14px;
  height: 14px;
  background: #fff;
  border: 1px solid #aeaba7;
  border-radius: 50%;
}

.radio.on {
  background: radial-gradient(circle, #7a2f12 0 2.5px, #ef7d50 3px);
  border-color: #bb6a48;
}

.reset-btn {
  width: 236px;
  margin: 3px 0 0 19px;
}

.ext-head {
  margin-top: 15px;
}

.space-row {
  display: flex;
  align-items: center;
  margin-top: 3px;
  padding-left: 13px;
}

.space-lab {
  flex: 0 0 153px;
  white-space: nowrap;
  overflow: hidden;
}

.space-spin {
  flex: 0 0 89px;
}

.glyph-lab {
  margin: 30px 0 0 13px;
  line-height: 17px;
}

.glyph-row {
  display: flex;
  align-items: center;
  margin-top: 27px;
  padding-left: 13px;
}

.min-lab {
  flex: 0 0 44px;
}

.min-spin {
  flex: 0 0 73px;
  margin-right: 7px;
}

.max-lab {
  flex: 0 0 49px;
}

.max-spin {
  flex: 0 0 68px;
}

.tabs-head {
  margin-top: 32px;
}

.tab-row {
  display: flex;
  align-items: center;
  margin: 3px 0 0 14px;
}

.tab-sel {
  flex: 0 0 98px;
  height: 24px;
}

.pos-lab {
  flex: 0 0 98px;
  padding-left: 7px;
}

.pos-spin {
  flex: 0 0 98px;
  height: 24px;
}

.pos-spin .val {
  line-height: 22px;
}

.fill-lab {
  flex: 0 0 114px;
  padding-left: 7px;
  white-space: nowrap;
}

.tab-ruler-row {
  display: flex;
  margin: 8px 0 0 14px;
}

.arrow-btn {
  flex: 0 0 19px;
  height: 21px;
  display: flex;
  align-items: center;
  justify-content: center;
  background: linear-gradient(#eeedeb, #cfcdca);
  border: 1px solid #a9a6a2;
  border-radius: 3px;
}

.tri-l {
  border: 4px solid transparent;
  border-right: 5px solid #55534f;
  border-left: 0;
}

.tri-r {
  border: 4px solid transparent;
  border-left: 5px solid #55534f;
  border-right: 0;
}

.tab-ruler {
  flex: 0 0 455px;
  height: 24px;
  margin: 0 6px 0 7px;
  display: flex;
  position: relative;
  overflow: hidden;
  border-bottom: 1px solid #111;
}

.tcell {
  flex: 0 0 100px;
  padding: 5px 0 0 2px;
  font-size: 14px;
  line-height: 13px;
  color: #111;
  border-left: 1px solid #111;
  background: repeating-linear-gradient(90deg, transparent 0 9px, #111 9px 10px) bottom / 100% 5px no-repeat;
}

.mark-first {
  position: absolute;
  left: 22px;
  top: 0;
  border: 4.5px solid transparent;
  border-top: 11px solid #00f;
  border-bottom: 0;
}

.mark-left {
  position: absolute;
  left: 0;
  bottom: 0;
  width: 6px;
  height: 12px;
  background: #00f;
}

.indent-row {
  display: flex;
  align-items: center;
  margin: 7px 0 0 14px;
}

.ind-ico {
  flex: 0 0 27px;
  height: 16px;
  padding-right: 7px;
}

.ind-ico.second {
  flex: 0 0 26px;
  margin-left: 8px;
  padding-right: 6px;
}

.ind-spin {
  flex: 0 0 111px;
}

.clear-btn {
  flex: 0 0 99px;
  margin-left: 27px;
}

.dialog-btns {
  display: flex;
  gap: 8px;
  height: 22px;
  margin: 23px 0 0 267px;
}

.done {
  flex: 0 0 82px;
}

.apply {
  flex: 0 0 95px;
}

.dialog-btns .btn {
  height: 22px;
}
```
